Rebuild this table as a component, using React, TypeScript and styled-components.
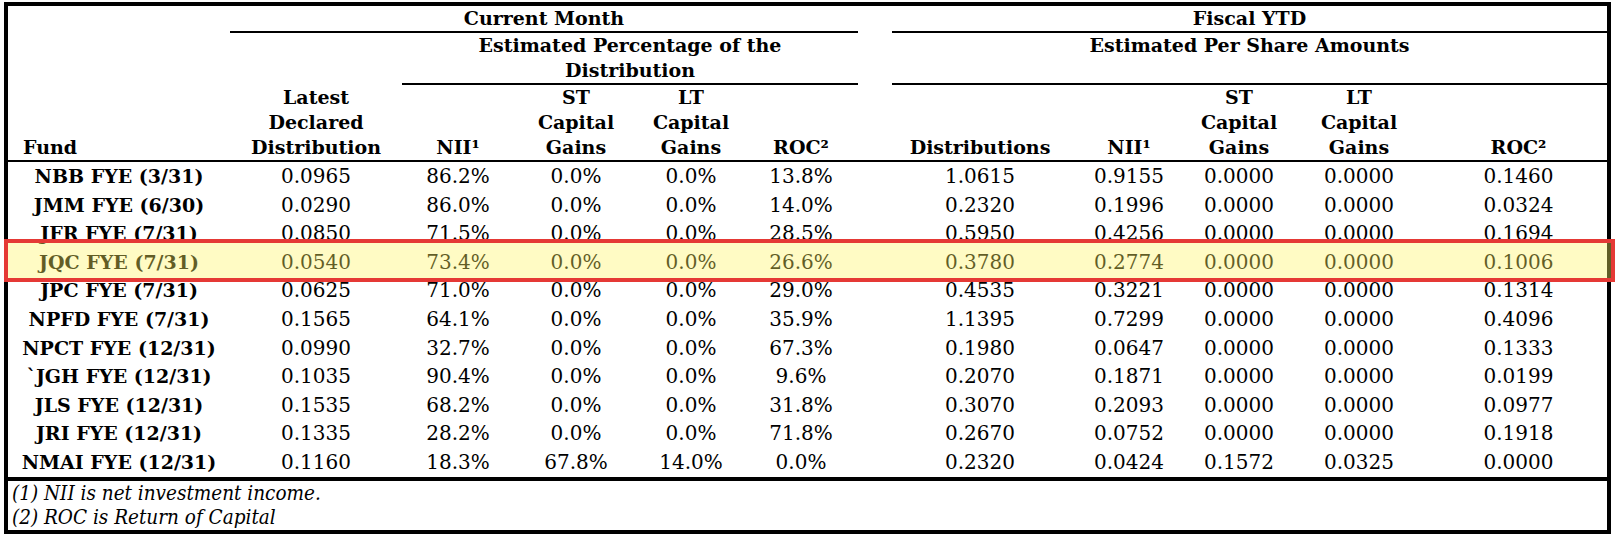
import React from 'react';
import styled, { createGlobalStyle } from 'styled-components';

const GlobalStyle = createGlobalStyle`
  html, body {
    margin: 0;
    padding: 0;
    background: #ffffff;
  }
  body {
    font-family: "DejaVu Serif", Georgia, serif;
    color: #000000;
  }
`

// shared column tracks for the header and body grids
const COLUMNS = '222px 172px 112px 124px 106px 114px 34px 176px 122px 98px 142px 1fr';
const ROW_HEIGHT = 28.6;
const HEADER_HEIGHT = 156;

const Frame = styled.div`
  position: relative;
  box-sizing: border-box;
  width: 1607px;
  margin: 2px 0 0 4px;
  border: 4px solid #000;
  font-size: 19px;
`

const HeadGrid = styled.div`
  display: grid;
  grid-template-columns: ${COLUMNS};
  grid-template-rows: 27px 52px 77px;
  font-weight: bold;
  line-height: 25px;
`

const GroupHead = styled.div<{ $col: number; $span: number; $row: number }>`
  grid-column: ${p => p.$col} / span ${p => p.$span};
  grid-row: ${p => p.$row};
  border-bottom: 2px solid #000;
  text-align: center;
`

const ColHead = styled.div<{ $left?: boolean }>`
  grid-row: 3;
  display: flex;
  flex-direction: column;
  justify-content: flex-end;
  border-bottom: 2px solid #000;
  text-align: ${p => (p.$left ? 'left' : 'center')};
  padding-left: ${p => (p.$left ? '15px' : '0')};
`

const BodyGrid = styled.div`
  display: grid;
  grid-template-columns: ${COLUMNS};
  grid-auto-rows: ${ROW_HEIGHT}px;
`

const Cell = styled.div<{ $bold?: boolean }>`
  text-align: center;
  white-space: nowrap;
  line-height: ${ROW_HEIGHT}px;
  font-size: ${p => (p.$bold ? '19px' : '20px')};
  font-weight: ${p => (p.$bold ? 'bold' : 'normal')};
`

const Notes = styled.div`
  border-top: 4px solid #000;
  padding: 0 0 1.4px 4px;
  font-size: 20.5px;
  font-style: italic;
  font-stretch: semi-condensed;
  line-height: 24px;
`

const Highlight = styled.div`
  position: absolute;
  left: -4px;
  right: -8px;
  height: 43px;
  box-sizing: border-box;
  border: 4px solid #e53935;
  background: rgba(255, 245, 100, 0.38);
  pointer-events: none;
`

type Row = [string, ...string[]];

const rows: Row[] = [
  ['NBB FYE (3/31)', '0.0965', '86.2%', '0.0%', '0.0%', '13.8%', '1.0615', '0.9155', '0.0000', '0.0000', '0.1460'],
  ['JMM FYE (6/30)', '0.0290', '86.0%', '0.0%', '0.0%', '14.0%', '0.2320', '0.1996', '0.0000', '0.0000', '0.0324'],
  ['JFR FYE (7/31)', '0.0850', '71.5%', '0.0%', '0.0%', '28.5%', '0.5950', '0.4256', '0.0000', '0.0000', '0.1694'],
  ['JQC FYE (7/31)', '0.0540', '73.4%', '0.0%', '0.0%', '26.6%', '0.3780', '0.2774', '0.0000', '0.0000', '0.1006'],
  ['JPC FYE (7/31)', '0.0625', '71.0%', '0.0%', '0.0%', '29.0%', '0.4535', '0.3221', '0.0000', '0.0000', '0.1314'],
  ['NPFD FYE (7/31)', '0.1565', '64.1%', '0.0%', '0.0%', '35.9%', '1.1395', '0.7299', '0.0000', '0.0000', '0.4096'],
  ['NPCT FYE (12/31)', '0.0990', '32.7%', '0.0%', '0.0%', '67.3%', '0.1980', '0.0647', '0.0000', '0.0000', '0.1333'],
  ['`JGH FYE (12/31)', '0.1035', '90.4%', '0.0%', '0.0%', '9.6%', '0.2070', '0.1871', '0.0000', '0.0000', '0.0199'],
  ['JLS FYE (12/31)', '0.1535', '68.2%', '0.0%', '0.0%', '31.8%', '0.3070', '0.2093', '0.0000', '0.0000', '0.0977'],
  ['JRI FYE (12/31)', '0.1335', '28.2%', '0.0%', '0.0%', '71.8%', '0.2670', '0.0752', '0.0000', '0.0000', '0.1918'],
  ['NMAI FYE (12/31)', '0.1160', '18.3%', '67.8%', '14.0%', '0.0%', '0.2320', '0.0424', '0.1572', '0.0325', '0.0000'],
];

const HIGHLIGHT_ROW = 3;

export default function App() {
  return (
    <>
      <GlobalStyle />
      <Frame>
        <HeadGrid>
          <GroupHead $col={2} $span={5} $row={1}>Current Month</GroupHead>
          <GroupHead $col={8} $span={5} $row={1}>Fiscal YTD</GroupHead>
          <GroupHead $col={3} $span={4} $row={2}>Estimated Percentage of the<br />Distribution</GroupHead>
          <GroupHead $col={8} $span={5} $row={2}>Estimated Per Share Amounts</GroupHead>

          <ColHead $left>Fund</ColHead>
          <ColHead>Latest<br />Declared<br />Distribution</ColHead>
          <ColHead>NII¹</ColHead>
          <ColHead>ST<br />Capital<br />Gains</ColHead>
          <ColHead>LT<br />Capital<br />Gains</ColHead>
          <ColHead>ROC²</ColHead>
          <ColHead />
          <ColHead>Distributions</ColHead>
          <ColHead>NII¹</ColHead>
          <ColHead>ST<br />Capital<br />Gains</ColHead>
          <ColHead>LT<br />Capital<br />Gains</ColHead>
          <ColHead>ROC²</ColHead>
        </HeadGrid>

        <BodyGrid>
          {rows.map(([fund, ...vals]) => (
            <React.Fragment key={fund}>
              <Cell $bold>{fund}</Cell>
              {vals.slice(0, 5).map((v, i) => <Cell key={'m' + i}>{v}</Cell>)}
              <Cell />
              {vals.slice(5).map((v, i) => <Cell key={'y' + i}>{v}</Cell>)}
            </React.Fragment>
          ))}
        </BodyGrid>

        <Notes>
          (1) NII is net investment income.<br />
          (2) ROC is Return of Capital
        </Notes>

        <Highlight style={{ top: HEADER_HEIGHT + HIGHLIGHT_ROW * ROW_HEIGHT - 9 }} />
      </Frame>
    </>
  );
}
